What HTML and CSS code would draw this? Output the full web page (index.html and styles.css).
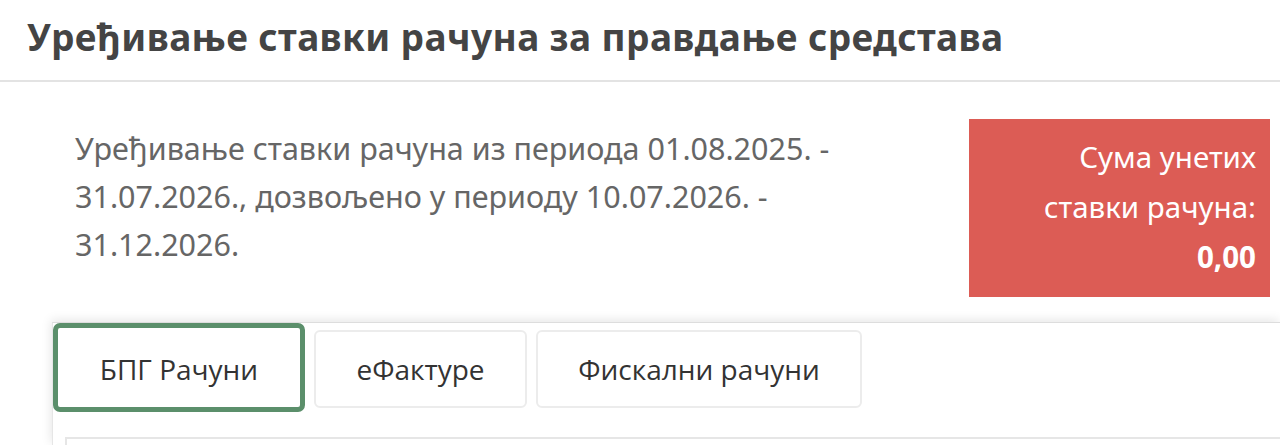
FILE: index.html
```html
<!DOCTYPE html>
<html>
<head>
    <meta charset="utf-8">
    <title>Уређивање ставки рачуна</title>
    <link rel="stylesheet" href="styles.css">
</head>
<body>
    <header class="page-header">
        <h1>Уређивање ставки рачуна за правдање средстава</h1>
    </header>

    <div class="intro">
        <p class="period-text">Уређивање ставки рачуна из периода 01.08.2025. - 31.07.2026., дозвољено у периоду 10.07.2026. - 31.12.2026.</p>
        <div class="sum-box">
            <p>Сума унетих ставки рачуна:</p>
            <p class="sum-value">0,00</p>
        </div>
    </div>

    <div class="card">
        <ul class="tabs">
            <li class="tab active">БПГ Рачуни</li>
            <li class="tab">еФактуре</li>
            <li class="tab">Фискални рачуни</li>
        </ul>
        <div class="tab-body"></div>
    </div>
</body>
</html>
```

FILE: styles.css
```css
/* Reset default margin and padding */
* {
    margin: 0;
    padding: 0;
    box-sizing: border-box;
}

body {
    font-family: "Noto Sans", "Open Sans", sans-serif;
    background-color: #fff;
    color: #333;
    overflow: hidden;
    height: 445px;
}

.page-header {
    padding: 15px 27px 0;
    height: 82px;
    border-bottom: 2px solid #e3e3e3;
}

.page-header h1 {
    font-size: 37px;
    font-weight: 700;
    color: #444;
    letter-spacing: 0.4px;
    line-height: 44px;
}

.intro {
    display: flex;
    justify-content: space-between;
    align-items: flex-start;
    padding: 37px 10px 0 75px;
}

.period-text {
    width: 810px;
    font-size: 30.5px;
    line-height: 48px;
    color: #666;
    padding-top: 5px;
}

.sum-box {
    width: 301px;
    height: 178px;
    background-color: #dc5c55;
    color: #fff;
    text-align: right;
    font-size: 29.5px;
    line-height: 50px;
    padding: 13px 14px 0 40px;
}

.sum-value {
    font-weight: 700;
}

.card {
    margin: 25px 0 0 52px;
    border-top: 1px solid #ddd;
    border-left: 1px solid #e6e6e6;
    box-shadow: -1px -2px 10px rgba(0, 0, 0, 0.1);
    height: 123px;
}

.tabs {
    list-style: none;
    display: flex;
    align-items: flex-start;
    gap: 9px;
}

.tab {
    font-family: "Open Sans", "Noto Sans", sans-serif;
    font-size: 28px;
    color: #333;
    height: 78px;
    margin-top: 7px;
    border: 2px solid #ececec;
    border-radius: 6px;
    display: flex;
    align-items: center;
    justify-content: center;
}

.tab:nth-child(2) {
    width: 213px;
}

.tab:nth-child(3) {
    width: 326px;
}

.tab.active {
    width: 252px;
    height: 89px;
    margin-top: 0;
    border: 5px solid #5b8f6b;
    border-radius: 7px;
    padding-top: 3px;
}

.tab-body {
    margin: 25px 0 0 12px;
    border-top: 2px solid #e6e6e6;
    border-left: 2px solid #e6e6e6;
    height: 8px;
}
```
